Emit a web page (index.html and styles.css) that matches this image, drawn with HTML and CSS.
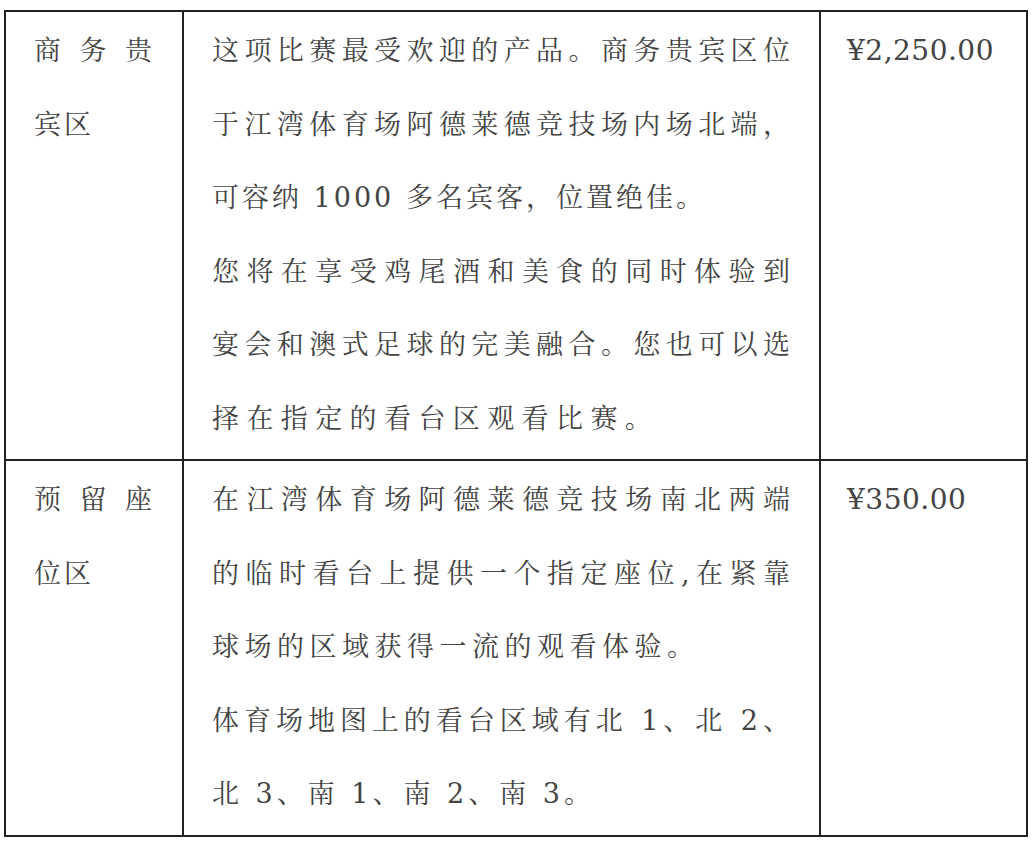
FILE: index.html
```html
<!DOCTYPE html>
<html lang="zh-CN">
<head>
<meta charset="utf-8">
<title>座位区价格</title>
<link rel="stylesheet" href="styles.css">
</head>
<body>
<div class="sheet">
  <div class="cell name">
    <span class="ln full">商务贵</span>
    <span class="ln ls3">宾区</span>
  </div>
  <div class="cell desc">
    <span class="ln full">这项比赛最受欢迎的产品。商务贵宾区位</span>
    <span class="ln full">于江湾体育场阿德莱德竞技场内场北端，</span>
    <span class="ln ls3">可容纳 1000 多名宾客，位置绝佳。</span>
    <span class="ln full">您将在享受鸡尾酒和美食的同时体验到</span>
    <span class="ln full">宴会和澳式足球的完美融合。您也可以选</span>
    <span class="ln ls7">择在指定的看台区观看比赛。</span>
  </div>
  <div class="cell price">¥2,250.00</div>

  <div class="cell name">
    <span class="ln full">预留座</span>
    <span class="ln ls3">位区</span>
  </div>
  <div class="cell desc">
    <span class="ln full">在江湾体育场阿德莱德竞技场南北两端</span>
    <span class="ln full">的临时看台上提供一个指定座位,在紧靠</span>
    <span class="ln ls5">球场的区域获得一流的观看体验。</span>
    <span class="ln full">体育场地图上的看台区域有北 1、北 2、</span>
    <span class="ln ls4">北 3、南 1、南 2、南 3。</span>
  </div>
  <div class="cell price">¥350.00</div>
</div>
</body>
</html>
```

FILE: styles.css
```css
html, body {
  margin: 0;
  background: #ffffff;
}

.sheet {
  display: grid;
  grid-template-columns: 178px 637px 207px;
  width: max-content;
  margin: 10px 0 0 4px;
  border-top: 2px solid #222222;
  border-left: 2px solid #222222;
  font-family: "DejaVu Serif", "Noto Serif CJK SC", "Noto Sans CJK SC", serif;
  font-size: 27px;
  line-height: 73.5px;
  color: #444444;
}

.cell {
  border-right: 2px solid #222222;
  border-bottom: 2px solid #222222;
  padding: 2px 29px 4px 28px;
}

.cell.name {
  padding-right: 30px;
}

.cell.price {
  padding-left: 26px;
  font-size: 28px;
  letter-spacing: 0.5px;
}

.ln {
  display: block;
}

.full {
  text-align: justify;
  text-align-last: justify;
}

.ls3 { letter-spacing: 3px; }
.ls4 { letter-spacing: 4px; }
.ls5 { letter-spacing: 5.5px; }
.ls7 { letter-spacing: 7.4px; }
```
